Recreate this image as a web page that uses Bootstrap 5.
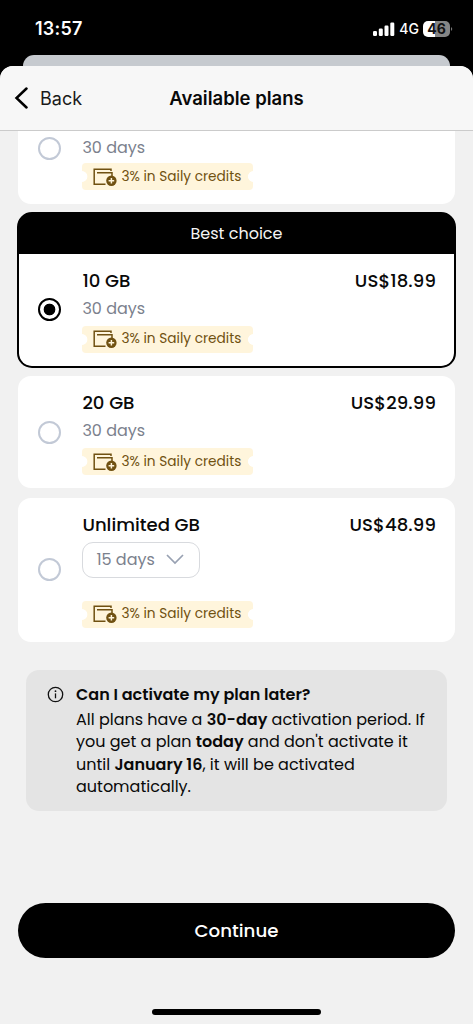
<!DOCTYPE html>
<html lang="en">
<head>
<meta charset="utf-8">
<meta name="viewport" content="width=device-width, initial-scale=1">
<title>Available plans</title>
<link href="https://cdn.jsdelivr.net/npm/bootstrap@5.3.0/dist/css/bootstrap.min.css" rel="stylesheet">
<style>
  body { font-family: Poppins, Inter, "Noto Sans", sans-serif; background: #000; color: #090909; }
  .screen { width: 473px; height: 1024px; }
  .status-bar { height: 55px; padding: 2px 20px 0 35px; font-family: Inter, sans-serif; }
  .clock { font-size: 18px; font-weight: 600; letter-spacing: .25px; }
  .network { font-size: 14px; font-weight: 500; }
  .battery { width: 27px; height: 16px; border-radius: 5px; background: linear-gradient(90deg, #fff 46%, #858585 46%); color: #111; font-size: 14px; font-weight: 700; line-height: 16px; }
  .sheet-behind { height: 11px; margin: 0 23px; background: #c6cacf; border-radius: 11px 11px 0 0; }
  .sheet { background: #f1f1f1; border-radius: 13px 13px 0 0; overflow: hidden; }
  .sheet-header { height: 65px; background: #f7f7f7; border-bottom: 1px solid #cbcbcb; font-family: Inter, sans-serif; display: grid; grid-template-columns: 1fr auto 1fr; padding: 0 14px; }
  .back-link { font-size: 18px; color: #1a1a1a; gap: 12px; }
  .sheet-title { font-size: 18.5px; font-weight: 600; padding-top: 2px; }
  .plans { padding: 0 18px; }
  .plan { border: 0; border-radius: 13px; padding: 12.5px 19px 12px 20px; margin-bottom: 9.5px; flex-direction: row; align-items: center; gap: 20.4px; color: #090909; }
  .plan-cut { border-radius: 0 0 13px 13px; padding-top: 2px; margin-bottom: 7.5px; height: 73px; }
  .chosen { border: 2.5px solid #000; border-radius: 15px; background: #000; margin: 0 -1px 8.5px; height: 156px; overflow: hidden; }
  .chosen .plan { margin: 0; border-radius: 0 0 12px 12px; padding: 12.5px 18px 12.5px 19px; height: 112px; }
  .ribbon { height: 40px; color: #f4f4f4; font-size: 16px; line-height: 39px; }
  .plan-20 { height: 112px; }
  .plan-unlimited { height: 144px; padding-top: 12px; padding-bottom: 13px; }
  .radio { flex: none; width: 23px; height: 23px; border: 2px solid #c2c9d6; border-radius: 50%; margin-right: 1px; }
  .radio-on { border-color: #000; background: radial-gradient(circle, #000 5.5px, transparent 6.2px); }
  .plan-name, .price { font-size: 18.1px; font-weight: 500; line-height: 27px; }
  .price { letter-spacing: .1px; }
  .days { padding-top: 1px; font-size: 16px; line-height: 28px; color: #7b818d; }
  .credit { width: 171px; height: 27px; margin-top: 3px; padding: 1px 0 0 10.5px; gap: 4.5px; border-radius: 4px; color: #705111; font-size: 13.7px;
    background: radial-gradient(circle at 0 50%, #fff 5px, #fff5dc 5.7px) left / 50% 100% no-repeat, radial-gradient(circle at 100% 50%, #fff 5px, #fff5dc 5.7px) right / 50.5% 100% no-repeat; }
  .credit svg { margin-top: -1px; }
  .plan-cut .credit { margin-top: 1px; }
  .duration { width: 118px; height: 36px; margin: 4px 0 23px; padding: 0 15px 0 13px; border: 1px solid #d8dade; border-radius: 11px; color: #7b818d; font-size: 16px; }
  .duration + .credit { margin-top: 0; }
  .info-box { margin: 28px 26px 0; height: 141px; padding: 14px 18px 0 21px; gap: 12px; background: #e4e4e4; border-radius: 13px; }
  .info-box svg { flex: none; margin-top: 2px; }
  .info-title { font-size: 16px; font-weight: 600; line-height: 22px; margin-bottom: 3px; }
  .info-text { font-size: 16px; line-height: 22.5px; white-space: nowrap; }
  .info-text strong { font-weight: 600; }
  .continue { margin: 92px 18px 0; height: 55px; border-radius: 28px; background: #000; color: #fff; font-size: 18.2px; font-weight: 500; padding: 2px 0 0; }
  .home-bar { width: 169px; height: 6px; border-radius: 3px; background: #000; margin: 51px auto 0; }
</style>
</head>
<body>
<svg class="d-none">
  <symbol id="wallet" viewBox="0 0 24 20">
    <path d="M18 3.9V2.2H1.2V17.2H12.5M4 5.7H19V9" fill="none" stroke="#705111" stroke-width="1.5"/>
    <circle cx="18.4" cy="13.8" r="5.2" fill="#705111"/>
    <path d="M15.6 13.8h5.6M18.4 11v5.6" stroke="#fff5dc" stroke-width="1.5"/>
  </symbol>
</svg>
<div class="screen d-flex flex-column overflow-hidden">
  <div class="status-bar d-flex align-items-center justify-content-between text-white">
    <span class="clock">13:57</span>
    <div class="d-flex align-items-center">
      <svg width="22" height="14" viewBox="0 0 22 14" fill="#fff" class="me-1"><rect x="0" y="9" width="4" height="5" rx="1.2"/><rect x="5.8" y="6.5" width="4" height="7.5" rx="1.2"/><rect x="11.5" y="3.5" width="4" height="10.5" rx="1.2"/><rect x="17.3" y=".5" width="4" height="13.5" rx="1.2"/></svg>
      <span class="network">4G</span>
      <span class="battery text-center ms-1">46</span>
      <svg width="3" height="6"><path d="M1 1Q3.5 3 1 5Z" fill="#777"/></svg>
    </div>
  </div>
  <div class="sheet-behind"></div>
  <main class="sheet flex-grow-1">
    <header class="sheet-header align-items-center">
      <a class="back-link d-flex align-items-center text-decoration-none" href="#"><svg width="14" height="22" viewBox="0 0 14 22"><path d="M12.5 1.5L2.5 11L12.5 20.5" fill="none" stroke="#000" stroke-width="2.5" stroke-linecap="round"/></svg><span>Back</span></a>
      <span class="sheet-title">Available plans</span><span></span>
    </header>
    <section class="plans">
      <div class="card plan plan-cut align-items-start">
        <span class="radio mt-1"></span>
        <div><div class="days">30 days</div>
          <div class="credit d-flex align-items-center"><svg width="24" height="20"><use href="#wallet"/></svg><span>3% in Saily credits</span></div></div>
      </div>
      <div class="chosen">
        <div class="ribbon text-center">Best choice</div>
        <div class="card plan">
          <span class="radio radio-on"></span>
          <div class="flex-grow-1"><div class="d-flex justify-content-between"><span class="plan-name">10 GB</span><span class="price">US$18.99</span></div>
            <div class="days">30 days</div>
            <div class="credit d-flex align-items-center"><svg width="24" height="20"><use href="#wallet"/></svg><span>3% in Saily credits</span></div></div>
        </div>
      </div>
      <div class="card plan plan-20">
        <span class="radio"></span>
        <div class="flex-grow-1"><div class="d-flex justify-content-between"><span class="plan-name">20 GB</span><span class="price">US$29.99</span></div>
          <div class="days">30 days</div>
          <div class="credit d-flex align-items-center"><svg width="24" height="20"><use href="#wallet"/></svg><span>3% in Saily credits</span></div></div>
      </div>
      <div class="card plan plan-unlimited mb-0">
        <span class="radio"></span>
        <div class="flex-grow-1"><div class="d-flex justify-content-between"><span class="plan-name">Unlimited GB</span><span class="price">US$48.99</span></div>
          <div class="duration d-flex align-items-center justify-content-between"><span>15 days</span><svg width="18" height="11" viewBox="0 0 18 11"><path d="M1 1L9 9L17 1" fill="none" stroke="#98a1b2" stroke-width="1.7"/></svg></div>
          <div class="credit d-flex align-items-center"><svg width="24" height="20"><use href="#wallet"/></svg><span>3% in Saily credits</span></div></div>
      </div>
    </section>
    <section class="info-box d-flex align-items-start">
      <svg width="17" height="17" viewBox="0 0 17 17"><circle cx="8.5" cy="8.5" r="7.2" fill="none" stroke="#111" stroke-width="1.3"/><path d="M8.5 7.4V12.3" stroke="#111" stroke-width="1.3"/><circle cx="8.5" cy="5.2" r=".9" fill="#111"/></svg>
      <div><div class="info-title">Can I activate my plan later?</div>
        <div class="info-text">All plans have a <strong>30-day</strong> activation period. If<br>you get a plan <strong>today</strong> and don't activate it<br>until <strong>January 16</strong>, it will be activated<br>automatically.</div></div>
    </section>
    <div class="d-grid"><button class="btn continue" type="button">Continue</button></div>
    <div class="home-bar"></div>
  </main>
</div>
<script src="https://cdn.jsdelivr.net/npm/bootstrap@5.3.0/dist/js/bootstrap.bundle.min.js"></script>
</body>
</html>
